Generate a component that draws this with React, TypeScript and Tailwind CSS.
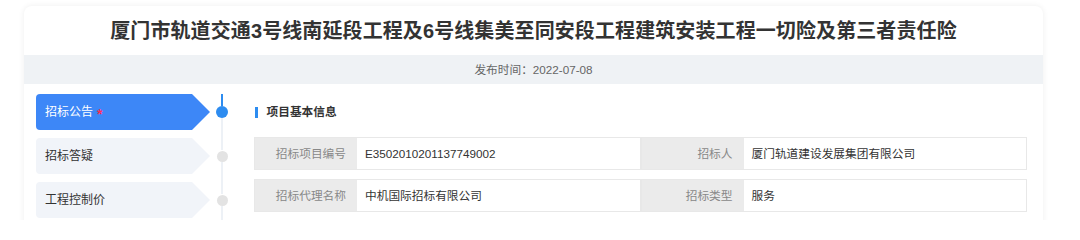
import React from "react";

const FONT = { fontFamily: '"Liberation Sans", "Noto Sans CJK SC", sans-serif' };

const navItems = [
  { label: "招标公告", active: true },
  { label: "招标答疑", active: false },
  { label: "工程控制价", active: false },
];

const rows = [
  [
    ["招标项目编号", "E3502010201137749002"],
    ["招标人", "厦门轨道建设发展集团有限公司"],
  ],
  [
    ["招标代理名称", "中机国际招标有限公司"],
    ["招标类型", "服务"],
  ],
];

export default function App() {
  return (
    <div className="w-[1080px] h-[220px] bg-white overflow-hidden" style={FONT}>
      <div className="ml-[24px] mt-[6px] w-[1019px] h-[260px] bg-white rounded-t-[8px] shadow-[0_0_6px_rgba(0,0,0,0.07)] overflow-hidden">
        <div className="h-[49px] flex items-center justify-center text-[20px] font-bold text-[#333] tracking-[0.1px]">
          厦门市轨道交通3号线南延段工程及6号线集美至同安段工程建筑安装工程一切险及第三者责任险
        </div>
        <div className="h-[29px] bg-[#eff2f5] flex items-center justify-center text-[11.7px] text-[#666]">
          发布时间：2022-07-08
        </div>
        <div className="flex pt-[10px] pl-[12px] pr-[16px]">
          <div className="flex flex-col">
            {navItems.map((it, i) => (
              <div key={i} className="flex h-[44px]">
                <div
                  className={
                    "w-[174px] h-[36px] rounded-l-[4px] flex items-center pl-[9px] text-[12px] [clip-path:polygon(0_0,calc(100%-18px)_0,100%_50%,calc(100%-18px)_100%,0_100%)] " +
                    (it.active ? "bg-[#3d87f7] text-white" : "bg-[#f1f4f9] text-[#333]")
                  }
                >
                  <span>{it.label}</span>
                  {it.active && (
                    <span className="ml-[4px] text-[#ff2d55] text-[14px] font-bold leading-none mt-[3px]">*</span>
                  )}
                </div>
                <div className="w-[24px] flex flex-col items-center">
                  <div className={"w-[2px] h-[12px] " + (it.active ? "bg-[#2d8cf0]" : "bg-[#edf1f6]")} />
                  <div
                    className={
                      it.active
                        ? "w-[12px] h-[12px] rounded-full bg-[#2d8cf0]"
                        : "w-[11px] h-[11px] rounded-full bg-[#e3e3e3] my-[0.5px]"
                    }
                  />
                  <div className="w-[2px] flex-1 bg-[#edf1f6]" />
                </div>
              </div>
            ))}
          </div>
          <div className="flex-1 pl-[20px]">
            <div className="h-[36px] flex items-center">
              <div className="w-[2.5px] h-[11px] bg-[#2d8cf0] ml-[1px]" />
              <div className="ml-[9px] text-[11.7px] font-bold text-[#333]">项目基本信息</div>
            </div>
            <div className="mt-[7px] flex flex-col gap-[9px]">
              {rows.map((r, i) => (
                <div key={i} className="grid grid-cols-2 h-[33px]">
                  {r.map(([k, v], j) => (
                    <div key={j} className="flex border border-[#e8e8e8]">
                      <div className="w-[102px] bg-[#ebebeb] flex items-center justify-end pr-[11px] text-[11.7px] text-[#888]">
                        {k}
                      </div>
                      <div className="flex-1 bg-white flex items-center pl-[8px] text-[11.7px] text-[#333]">
                        {v}
                      </div>
                    </div>
                  ))}
                </div>
              ))}
            </div>
          </div>
        </div>
      </div>
    </div>
  );
}
